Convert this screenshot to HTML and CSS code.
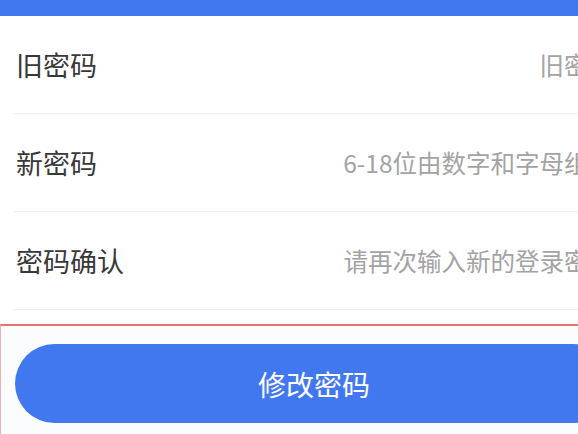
FILE: index.html
```html
<!DOCTYPE html>
<html>
  <head>
    <title>修改密码</title>
    <link rel="stylesheet" href="styles.css">
  </head>
  <body>
    <div class="page">
      <div class="top-bar"></div>
      <div class="form-list">
        <div class="form-row">
          <span class="label">旧密码</span>
          <span class="hint">旧密码</span>
        </div>
        <div class="form-row">
          <span class="label">新密码</span>
          <span class="hint">6-18位由数字和字母组成</span>
        </div>
        <div class="form-row">
          <span class="label">密码确认</span>
          <span class="hint">请再次输入新的登录密码</span>
        </div>
      </div>
      <div class="footer">
        <button class="submit">修改密码</button>
      </div>
    </div>
  </body>
</html>
```

FILE: styles.css
```css
html, body {
  margin: 0;
  padding: 0;
  overflow: hidden;
  background-color: #ffffff;
}

.page {
  width: 627px;
  font-family: "Noto Sans CJK SC", "Noto Sans", sans-serif;
}

.top-bar {
  height: 16px;
  background-color: #4178f0;
}

.form-list {
  padding-left: 14px;
}

.form-row {
  display: flex;
  justify-content: space-between;
  align-items: center;
  height: 97px;
  padding-right: 14px;
  border-bottom: 1px solid #efefef;
}

.label {
  padding-left: 2px;
  font-size: 27px;
  color: #383838;
}

.hint {
  font-size: 24.5px;
  color: #a3a3a3;
}

.footer {
  margin-top: 14px;
  padding: 18px 14px 20px 14px;
  border-top: 2px solid #e57373;
  border-left: 1px solid #f0b0b0;
  background-color: #fbfcfd;
}

.submit {
  display: block;
  width: 100%;
  height: 79px;
  border: none;
  border-radius: 40px;
  background-color: #4178f0;
  color: #ffffff;
  font-family: "Noto Sans CJK SC", "Noto Sans", sans-serif;
  font-size: 28px;
}
```
